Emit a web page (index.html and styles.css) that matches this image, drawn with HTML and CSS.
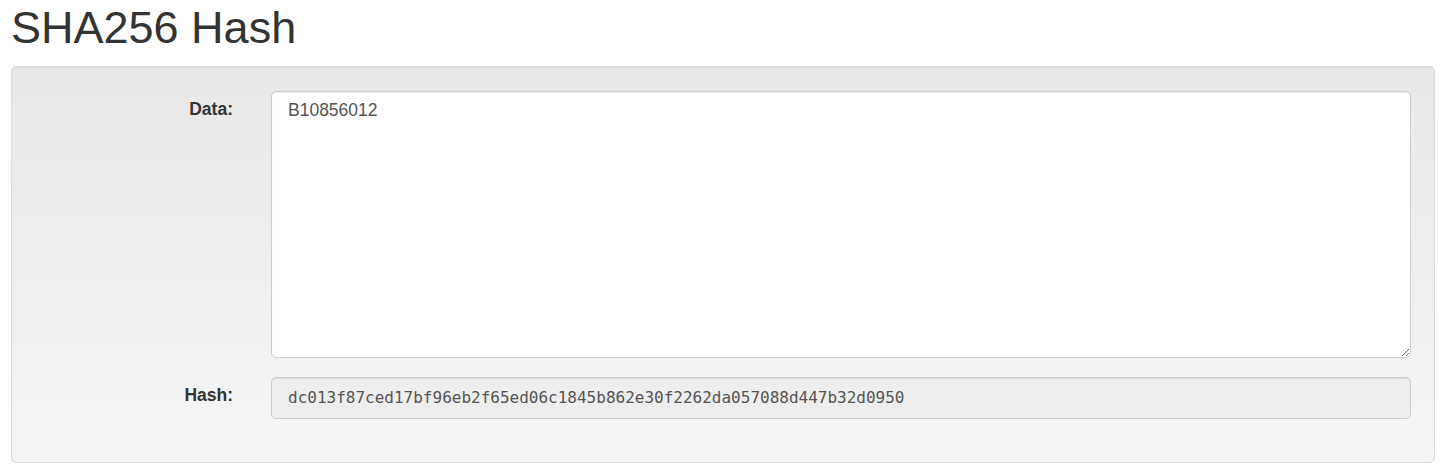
FILE: index.html
```html
<!DOCTYPE html>
<html>
<head>
<meta charset="utf-8">
<title>SHA256 Hash</title>
<link rel="stylesheet" href="styles.css">
</head>
<body>
<div class="page">
  <h1 class="title">SHA256 Hash</h1>
  <div class="well">
    <div class="form-grid">
      <label class="label" for="data">Data:</label>
      <textarea id="data" class="control textarea">B10856012</textarea>
      <div class="label">Hash:</div>
      <div class="control readonly">dc013f87ced17bf96eb2f65ed06c1845b862e30f2262da057088d447b32d0950</div>
    </div>
  </div>
</div>
</body>
</html>
```

FILE: styles.css
```css
html, body {
  margin: 0;
  padding: 0;
  background: #fff;
}

body {
  font-family: "Liberation Sans", Arial, Helvetica, sans-serif;
  color: #333;
}

.page {
  padding: 0 11px;
}

.title {
  font-size: 45px;
  font-weight: 500;
  line-height: 48px;
  margin: 4px 0 14px;
  color: #333;
}

.well {
  border: 1px solid #dcdcdc;
  border-radius: 5px;
  background-color: #f5f5f5;
  background-image: linear-gradient(to bottom, #e8e8e8 0, #f5f5f5 100%);
  box-shadow: inset 0 1px 3px rgba(0, 0, 0, 0.05), 0 1px 0 rgba(255, 255, 255, 0.1);
  padding: 24px 23px 43px 0;
}

.form-grid {
  display: grid;
  grid-template-columns: 221px 1fr;
  column-gap: 38px;
  row-gap: 19px;
}

.label {
  font-size: 17.5px;
  font-weight: bold;
  line-height: 25px;
  padding-top: 6px;
  text-align: right;
  color: #333;
}

.control {
  box-sizing: border-box;
  display: block;
  width: 100%;
  margin: 0;
  border: 1px solid #ccc;
  border-radius: 5px;
  background: #fff;
  color: #555;
  box-shadow: inset 0 1px 1px rgba(0, 0, 0, 0.075);
}

.textarea {
  height: 267px;
  padding: 6px 16px 5px;
  font-family: "Liberation Sans", Arial, Helvetica, sans-serif;
  font-size: 17.5px;
  line-height: 25px;
  resize: vertical;
  outline: none;
}

.readonly {
  height: 42px;
  padding: 0 16px;
  background: #eee;
  font-family: "DejaVu Sans Mono", "Liberation Mono", monospace;
  font-size: 16px;
  line-height: 40px;
  white-space: nowrap;
  overflow: hidden;
}
```
